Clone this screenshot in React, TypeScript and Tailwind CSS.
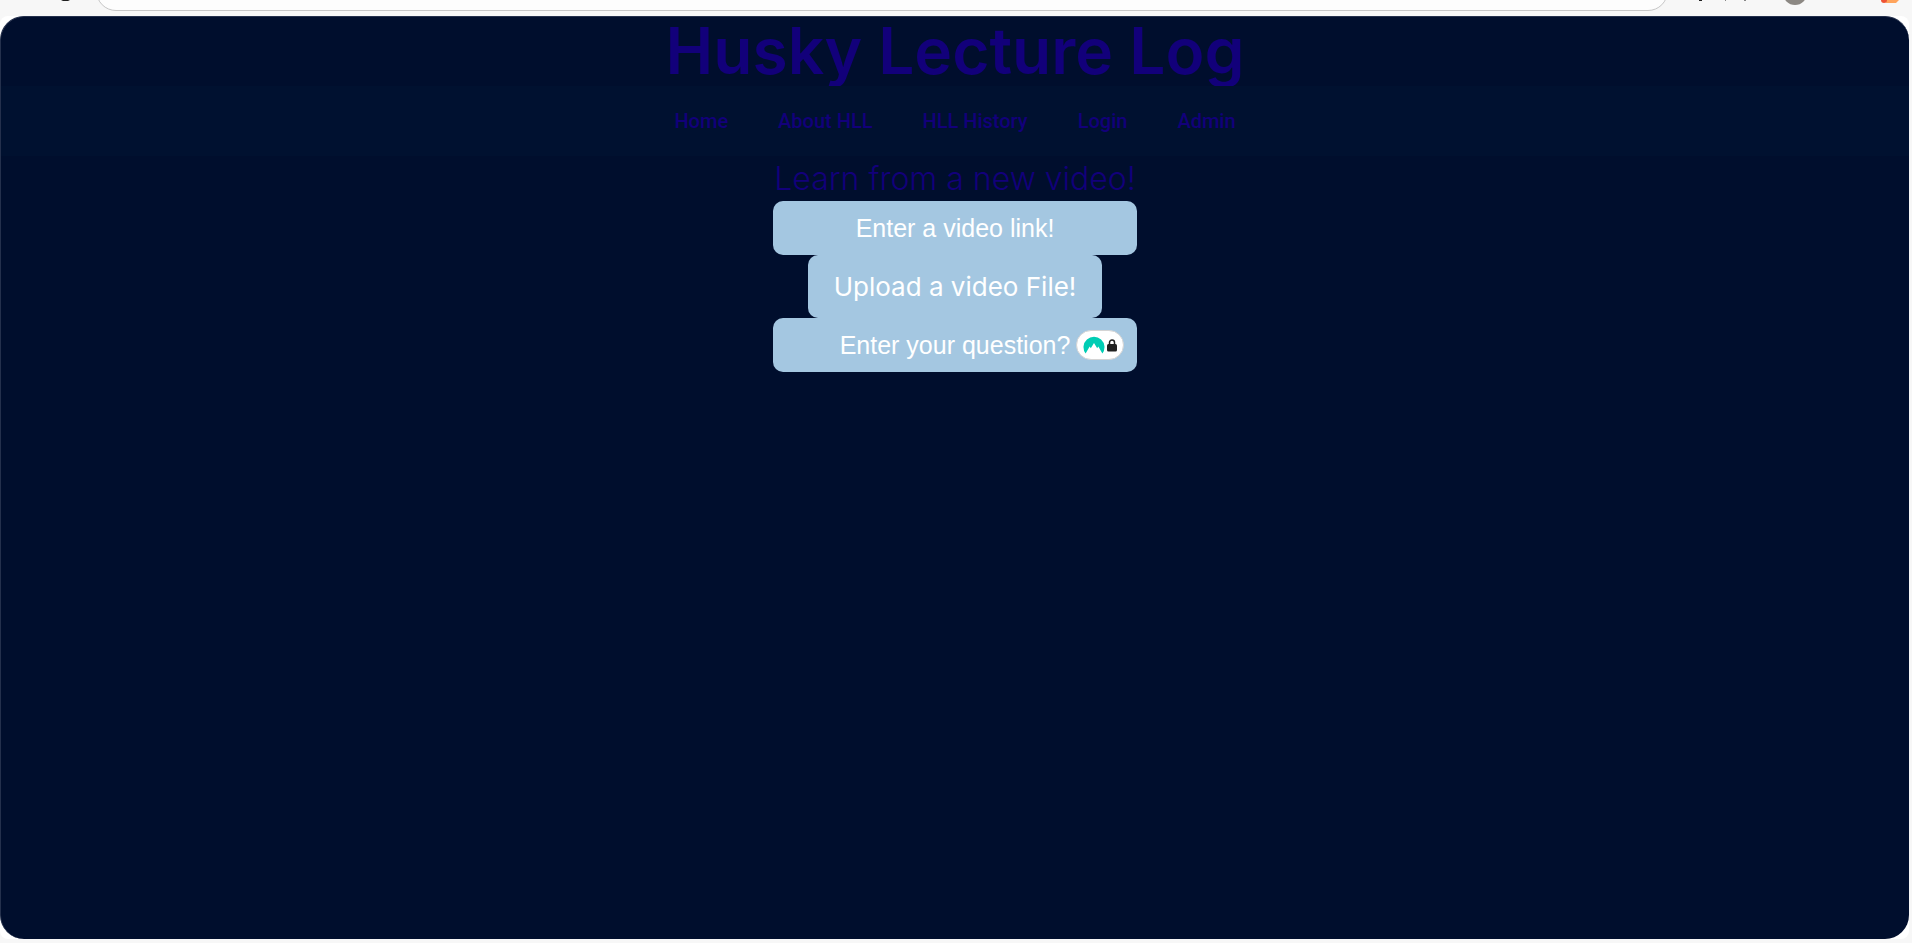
import React from "react";

const links = ["Home", "About HLL", "HLL History", "Login", "Admin"];

function BrowserEdge() {
  return (
    <div className="flex h-4 shrink-0 items-end overflow-hidden bg-[#f7f7f7]" aria-hidden="true">
      <div className="flex h-4 w-24 items-start justify-end pr-6">
        <svg width="14" height="3" viewBox="0 0 14 3">
          <path d="M3 0H12L10 1H5Z" fill="#202020" />
        </svg>
      </div>
      <div className="mb-[5px] flex h-10 min-w-0 flex-1 items-end justify-end rounded-full border border-[#c6c6c6] bg-[#fdfdfd] pr-5">
        <svg width="16" height="11" viewBox="0 0 16 11">
          <path d="M1 0h3v1h-3zM11 0h3v1h-3z" fill="#9a9a9a" />
        </svg>
      </div>
      <svg className="w-[244px] shrink-0" height="16" viewBox="0 0 244 16">
        <path d="M31 0h3v1h-3z" fill="#202020" />
        <path d="M57 0h1v1h-1zM76 0h2v1h-2z" fill="#888" />
        <circle cx="127" cy="-7" r="12" fill="#8c8883" />
        <path d="M216 0h15l-3 3h-10z" fill="#ffa45c" />
        <circle cx="216" cy="0" r="3" fill="#ee5335" />
      </svg>
    </div>
  );
}

function PasswordBadge() {
  return (
    <button
      type="button"
      aria-label="Password manager"
      className="absolute top-3 right-[13px] flex h-[30px] w-12 items-center justify-center gap-[2px] rounded-full border border-[#d4d4d4] bg-white"
    >
      <svg width="22" height="18" viewBox="0 0 22 18">
        <path
          d="M2.600 17.500A10.500 10.500 0 1 1 19.400 17.500L15.300 10.500L14.200 12.300L11 7L7.800 12.300L6.700 10.500Z"
          fill="#00cdb4"
        />
      </svg>
      <svg width="10" height="13" viewBox="0 0 10 13">
        <path d="M2.500 6V3.500a2.500 2.500 0 0 1 5 0V6" fill="none" stroke="#202020" strokeWidth="1.500" />
        <rect y="5" width="10" height="7.500" rx="1.500" fill="#202020" />
      </svg>
    </button>
  );
}

const field =
  "h-[54px] w-full rounded-[10px] bg-[#a4c7e1] text-center font-['Liberation_Sans',sans-serif] text-[25px] text-white placeholder:text-white placeholder:opacity-100";

export default function App() {
  return (
    <div className="flex min-h-screen flex-col bg-[#f7f7f7]">
      <BrowserEdge />
      <div className="mr-[3px] mb-1 flex flex-1 flex-col rounded-lg bg-white">
        <div className="flex flex-1 flex-col overflow-hidden rounded-3xl border-t border-l border-[#24304c] bg-[#000e2d]">
          <header>
            <h1 className="h-[69px] text-center font-['Inter',sans-serif] text-[64px] leading-[67px] font-semibold text-[#12007a]">
              Husky Lecture Log
            </h1>
            <nav className="relative flex h-[70px] items-center justify-center gap-[50px] bg-[#001130] font-['Roboto',sans-serif] text-[20px] font-medium text-[#12007a]">
              {links.map((l) => (
                <a key={l} href="#">
                  {l}
                </a>
              ))}
            </nav>
          </header>
          <main className="flex flex-col items-center">
            <h2 className="h-[45px] text-center font-['Inter',sans-serif] text-[32px] leading-[45px] font-light text-[#12007a]">
              Learn from a new video!
            </h2>
            <form className="flex w-[364px] flex-col items-center" onSubmit={(e) => e.preventDefault()}>
              <input className={field} type="text" aria-label="Video link" placeholder="Enter a video link!" />
              <button
                type="button"
                className="h-[63px] w-[294px] rounded-[10px] bg-[#a4c7e1] font-['Inter',sans-serif] text-[26px] whitespace-nowrap text-white"
              >
                Upload a video File!
              </button>
              <div className="relative w-full">
                <input className={field} type="text" aria-label="Question" placeholder="Enter your question?" />
                <PasswordBadge />
              </div>
            </form>
          </main>
        </div>
      </div>
    </div>
  );
}
